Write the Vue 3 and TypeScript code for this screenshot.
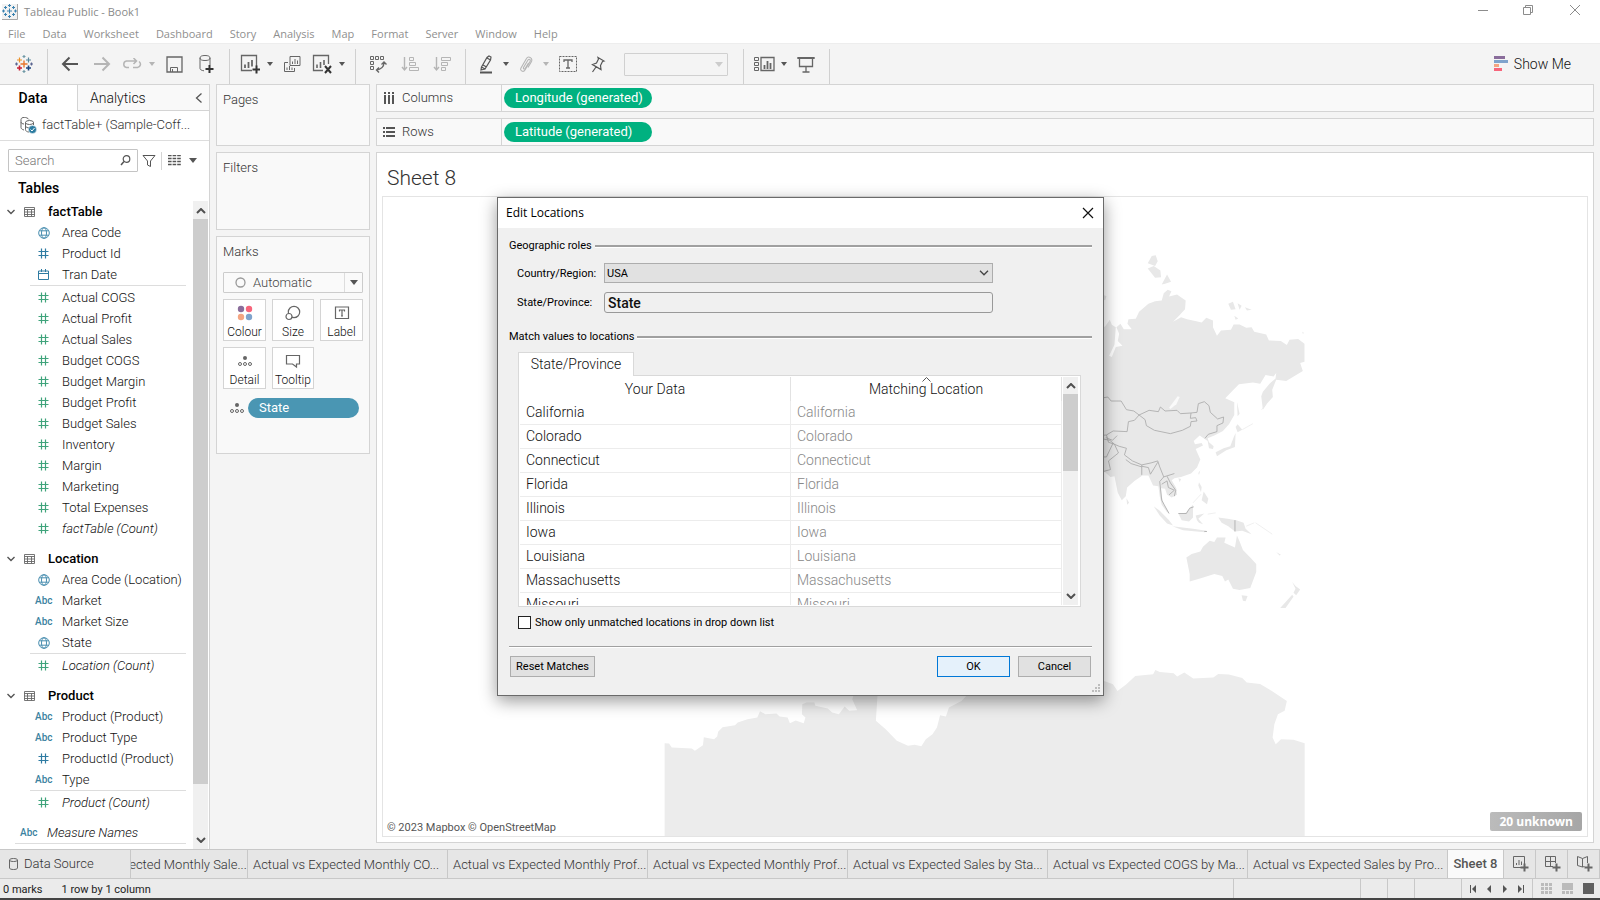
<script setup lang="ts">
import { ref } from 'vue'

type Kind = 'geo' | 'num' | 'date' | 'abc'
interface Field { name: string; kind: Kind; measure?: boolean; italic?: boolean }
interface Group { name: string; dims: Field[]; measures: Field[] }

const menus: string[] = ['File', 'Data', 'Worksheet', 'Dashboard', 'Story', 'Analysis', 'Map', 'Format', 'Server', 'Window', 'Help']

const measure = (name: string): Field => ({ name, kind: 'num', measure: true })
const count = (name: string): Field => ({ name: `${name} (Count)`, kind: 'num', measure: true, italic: true })

const groups: Group[] = [
  {
    name: 'factTable',
    dims: [
      { name: 'Area Code', kind: 'geo' },
      { name: 'Product Id', kind: 'num' },
      { name: 'Tran Date', kind: 'date' },
    ],
    measures: [
      ...['Actual COGS', 'Actual Profit', 'Actual Sales', 'Budget COGS', 'Budget Margin', 'Budget Profit',
        'Budget Sales', 'Inventory', 'Margin', 'Marketing', 'Total Expenses'].map(measure),
      count('factTable'),
    ],
  },
  {
    name: 'Location',
    dims: [
      { name: 'Area Code (Location)', kind: 'geo' },
      { name: 'Market', kind: 'abc' },
      { name: 'Market Size', kind: 'abc' },
      { name: 'State', kind: 'geo' },
    ],
    measures: [count('Location')],
  },
  {
    name: 'Product',
    dims: [
      { name: 'Product (Product)', kind: 'abc' },
      { name: 'Product Type', kind: 'abc' },
      { name: 'ProductId (Product)', kind: 'num' },
      { name: 'Type', kind: 'abc' },
    ],
    measures: [count('Product')],
  },
]

const states: string[] = ['California', 'Colorado', 'Connecticut', 'Florida', 'Illinois', 'Iowa', 'Louisiana', 'Massachusetts', 'Missouri']

const sheets: string[] = [
  'Actual vs Expected Monthly Sale...',
  'Actual vs Expected Monthly CO...',
  'Actual vs Expected Monthly Prof...',
  'Actual vs Expected Monthly Prof...',
  'Actual vs Expected Sales by Sta...',
  'Actual vs Expected COGS by Ma...',
  'Actual vs Expected Sales by Pro...',
]

const search = ref('')
const country = ref('USA')
const role = ref('State')
const onlyUnmatched = ref(false)
</script>

<template>
  <div class="app">
    <header class="titlebar">
      <svg class="applogo" width="16" height="16" viewBox="0 0 16 16" fill="none" stroke="#3b82b0" stroke-width="1">
        <rect x="0" y="0" width="16" height="16" fill="#f2f2f2" stroke="none" />
        <path d="M15.5 0v15.5H0" stroke="#a8a8a8" />
        <path d="M7.500 4.500v5M5 7h5M7.500 0v3M6 1.500h3M7.500 11v3M6 12.500h3M1.500 5.500v3M0 7h3M13.500 5.500v3M12 7h3M3.500 2v3M2 3.500h3M11.500 2v3M10 3.500h3M3.500 9v3M2 10.500h3M11.500 9v3M10 10.500h3" />
      </svg>
      <span class="apptitle">Tableau Public - Book1</span>
      <div class="winbtns">
        <button aria-label="Minimise"><svg width="12" height="12" viewBox="0 0 12 12"><path d="M1 6.500h10" stroke="#8c8c8c" /></svg></button>
        <button aria-label="Restore"><svg width="12" height="12" viewBox="0 0 12 12" fill="none" stroke="#8c8c8c"><path d="M1.500 3.500h7v7h-7zM3.500 3.500v-2h7v7h-2" /></svg></button>
        <button aria-label="Close"><svg width="12" height="12" viewBox="0 0 12 12"><path d="M1 1l10 10M11 1L1 11" stroke="#8c8c8c" /></svg></button>
      </div>
    </header>

    <nav class="menubar">
      <button v-for="m in menus" :key="m">{{ m }}</button>
    </nav>

    <div class="toolbar">
      <button class="tb" aria-label="Start page">
        <svg width="18" height="18" viewBox="0 0 18 18" fill="none" stroke-width="1.200">
          <path d="M9 5.500v7M5.500 9h7" stroke="#e8762c" stroke-width="1.400" />
          <path d="M4.500 2.500v5M2 5h5" stroke="#eb9129" /><path d="M13.500 2.500v5M11 5h5" stroke="#59879b" />
          <path d="M4.500 10.500v5M2 13h5" stroke="#c72035" stroke-width="1.600" /><path d="M13.500 10.500v5M11 13h5" stroke="#1f457e" stroke-width="1.600" />
          <path d="M9 0v3M7.500 1.500h3M9 15v3M7.500 16.500h3" stroke="#7099a6" /><path d="M1.500 7.500v3M0 9h3M16.500 7.500v3M15 9h3" stroke="#5b6591" />
        </svg>
      </button>
      <i class="sep" />
      <button class="tb" aria-label="Back"><svg width="18" height="16" viewBox="0 0 18 16" fill="none" stroke="#555" stroke-width="2"><path d="M17 8H2M8.500 1.500L2 8l6.500 6.500" /></svg></button>
      <button class="tb" aria-label="Forward"><svg width="18" height="16" viewBox="0 0 18 16" fill="none" stroke="#b5b5b5" stroke-width="2"><path d="M1 8h15M9.500 1.500L16 8l-6.500 6.500" /></svg></button>
      <button class="tb narrow" aria-label="Replay"><svg width="20" height="12" viewBox="0 0 20 12" fill="none" stroke="#b5b5b5" stroke-width="1.500"><path d="M7 9.500H4.500a3.300 3.300 0 0 1 0-6.500H14M11 9.500h4.500a3.300 3.300 0 0 0 1.500-6M11.500 0l3 3-3 3" /></svg></button>
      <button class="caret dim" aria-label="Replay options" />
      <button class="tb" aria-label="Save"><svg width="17" height="17" viewBox="0 0 17 17" fill="none" stroke="#666"><path d="M1 1h15v15H1z" stroke-width="1.300" /><path d="M4.500 16v-4.500h7V16M6.500 16v-3" /></svg></button>
      <button class="tb" aria-label="New data source"><svg width="18" height="20" viewBox="0 0 18 20" fill="none" stroke="#666"><ellipse cx="8" cy="4" rx="5" ry="2.500" /><path d="M3 4v10.500c0 1 1.500 2 4 2.300M13 4v7" /><path d="M12.500 11v8M8.500 15h8" stroke="#333" stroke-width="2" /></svg></button>
      <i class="sep" />
      <button class="tb narrow" aria-label="New worksheet"><svg width="20" height="20" viewBox="0 0 20 20" fill="none" stroke="#666"><path d="M12 16.500H1.500v-15h15V12" stroke-width="1.300" /><path d="M5 14v-3.500M8.500 14V8M12 12.500V6" stroke-width="1.800" /><path d="M16.500 11.500v8M12.500 15.500h8" stroke="#333" stroke-width="2" /></svg></button>
      <button class="caret" aria-label="New worksheet options" />
      <button class="tb" aria-label="Duplicate"><svg width="18" height="18" viewBox="0 0 18 18" fill="none" stroke="#666"><path d="M7 1.500h10v9H7zM5 7.500H1.500v9h10V13" /><path d="M9.500 9V6.500M12 9V4M14.500 9V5.500M4 15v-2.500M6.500 15v-4M9 15v-2.500" /></svg></button>
      <button class="tb narrow" aria-label="Clear sheet"><svg width="20" height="20" viewBox="0 0 20 20" fill="none" stroke="#666"><path d="M11 16.500H1.500v-15h15V10" stroke-width="1.300" /><path d="M5 14v-3.500M8.500 14V8M12 11V6" stroke-width="1.600" /><path d="M13 12l6 7M19 12l-6 7" stroke="#333" stroke-width="2" /></svg></button>
      <button class="caret" aria-label="Clear options" />
      <i class="sep" />
      <button class="tb" aria-label="Swap rows and columns"><svg width="18" height="18" viewBox="0 0 18 18" fill="none" stroke="#666"><path d="M1.500 1.500h3v3h-3zM6.500 1.500h3v3h-3zM11.500 1.500h3v3h-3zM1.500 6.500h3v3h-3zM1.500 11.500h3v3h-3z" /><path d="M15 7.500c0 4-3 7-7.500 7.500M12.500 9.500L15 7l2.500 2.500M10 12.500L7.500 15l2.500 2.500" stroke-width="1.400" /></svg></button>
      <button class="tb" aria-label="Sort ascending"><svg width="19" height="16" viewBox="0 0 19 16" fill="none" stroke="#b5b5b5"><path d="M3.500 1v13M1 11l2.500 3L6 11" stroke-width="1.400" /><path d="M8.500 1.500h4v3h-4zM8.500 6.500h6v3h-6zM8.500 11.500h9v3h-9z" /></svg></button>
      <button class="tb" aria-label="Sort descending"><svg width="19" height="16" viewBox="0 0 19 16" fill="none" stroke="#b5b5b5"><path d="M3.500 1v13M1 11l2.500 3L6 11" stroke-width="1.400" /><path d="M8.500 1.500h9v3h-9zM8.500 6.500h6v3h-6zM8.500 11.500h4v3h-4z" /></svg></button>
      <i class="sep" />
      <button class="tb narrow" aria-label="Highlight"><svg width="14" height="19" viewBox="0 0 14 19" fill="none" stroke="#555"><path d="M2.500 12L8 2.500l2-1.500 2 1-.5 3L6 14zM4 10l3.500 2M8 3l3.500 2M2.500 12L2 15l4-1" stroke-width="1.200" /><path d="M1 17.500h12" stroke-width="2" /></svg></button>
      <button class="caret" aria-label="Highlight options" />
      <button class="tb narrow" aria-label="Group members"><svg width="14" height="17" viewBox="0 0 14 17" fill="none" stroke="#b5b5b5" stroke-width="1.100"><path d="M4.500 11.500L9 4c1-1.500 3-.5 2 1.500L6 14c-1.500 2.500-5.500 1-4-2L7.500 2.500C9-.3 14 1.500 12.500 5.500L9 11.500M4.500 11.500c-.5 1.500 1 2 1.800.8L9.500 7" /></svg></button>
      <button class="caret dim" aria-label="Group options" />
      <button class="tb" aria-label="Show mark labels"><svg width="18" height="16" viewBox="0 0 18 16" fill="none" stroke="#666"><path d="M.5.5h17v15H.5z" stroke-dasharray="2 1" /><path d="M5 6V4h8v2M9 4v8M7 12h4" stroke-width="1.300" /></svg></button>
      <button class="tb narrow" aria-label="Fix axes"><svg width="16" height="17" viewBox="0 0 16 17" fill="none" stroke="#555" stroke-width="1.200"><path d="M8 1.500l6 3.500-1.500.5-2 4 .5 4L2.500 8.500l4-1.500 2-4zM6 11l-3.500 5" /></svg></button>
      <span class="fit"><select aria-label="Fit"><option value=""></option></select><i class="tri" /></span>
      <i class="sep" />
      <button class="tb narrow" aria-label="Show cards"><svg width="21" height="16" viewBox="0 0 21 16" fill="none" stroke="#666"><path d="M.5 1.500h4v3h-4zM.5 6.500h4v3h-4zM.5 11.500h4v3h-4z" /><path d="M7 1.500h13v13H7z" stroke-width="1.300" /><path d="M10.500 13V9M13.500 13V5M16.500 13V7" stroke-width="1.800" /></svg></button>
      <button class="caret" aria-label="Card options" />
      <button class="tb" aria-label="Presentation mode"><svg width="18" height="17" viewBox="0 0 18 17" fill="none" stroke="#666" stroke-width="1.300"><path d="M.5 2h17M2.500 2v8.500h13V2M9 10.500V16M5.500 16h7" /><path d="M.5 2h17" stroke-width="2" /></svg></button>
      <i class="sep" />
      <button class="showme">
        <svg width="14" height="16" viewBox="0 0 14 16"><path fill="#8a6d9b" d="M0 0h11v3H0z" /><path fill="#7fa3cc" d="M0 4h14v3H0z" /><path fill="#f4a582" d="M0 8h5v3H0z" /><path fill="#f7657b" d="M0 12h8v3H0z" /></svg>
        Show Me
      </button>
    </div>

    <main class="work">
      <aside class="side">
        <div class="sidetabs">
          <button class="on">Data</button>
          <button class="off">Analytics
            <svg width="8" height="10" viewBox="0 0 8 10" fill="none" stroke="#555" stroke-width="1.300"><path d="M6.500.5L1.500 5l5 4.500" /></svg>
          </button>
        </div>
        <button class="source">
          <svg width="17" height="17" viewBox="0 0 17 17" fill="none" stroke="#666"><path d="M9 2.500C7-.3 1-.3 1 2.500v8c0 1 1 2 3 2.500M1 5c0 1 1.500 2 3 2" /><ellipse cx="9.500" cy="5.500" rx="4" ry="2" /><path d="M5.500 5.500v7c0 1.500 1.500 2.500 3.500 2.500M13.500 5.500V8M5.500 9c0 1 2 2 4 2" /><circle cx="12.500" cy="12.500" r="4" fill="#2b7ba0" stroke="#fff" stroke-width=".5" /><path d="M10.500 12.500l1.500 1.500 2.500-3" stroke="#fff" /></svg>
          factTable+ (Sample-Coff...
        </button>
        <div class="find">
          <span class="box">
            <input v-model="search" type="text" placeholder="Search" aria-label="Search">
            <svg width="11" height="11" viewBox="0 0 11 11" fill="none" stroke="#555" stroke-width="1.200"><circle cx="6.500" cy="4" r="3.300" /><path d="M4 6.500L1 10" stroke-width="1.500" /></svg>
          </span>
          <button aria-label="Filter"><svg width="14" height="14" viewBox="0 0 14 14" fill="none" stroke="#555"><path d="M1 1.500h12L8.500 7v5.500l-3-1.500V7z" /></svg></button>
          <i class="vbar" />
          <button class="view" aria-label="View as"><svg width="13" height="11" viewBox="0 0 13 11" fill="none" stroke="#555"><path d="M0 .5h13M0 3.500h13M0 6.500h13M0 9.500h13" stroke-width="1.400" stroke-dasharray="3.600 1" /></svg><i class="tri" /></button>
        </div>
        <h2>Tables</h2>
        <div class="treewrap">
          <div class="tree">
            <section v-for="g in groups" :key="g.name">
              <h3>
                <svg width="8" height="6" viewBox="0 0 8 6" fill="none" stroke="#555" stroke-width="1.400"><path d="M.5 1L4 4.500 7.500 1" /></svg>
                <svg class="tbl" width="11" height="10" viewBox="0 0 11 10" fill="none" stroke="#666"><path d="M.5.5h10v9H.5zM.5 2.500h10M.5 5h10M.5 7.500h10M3.500 2.500v7M7.500 2.500v7" stroke-width=".9" /></svg>
                {{ g.name }}
              </h3>
              <ul>
                <li v-for="f in g.dims" :key="f.name" :class="{ it: f.italic }">
                  <span class="fi">
                    <svg v-if="f.kind === 'geo'" width="12" height="12" viewBox="0 0 12 12" fill="none" stroke="#4a8fb0"><circle cx="6" cy="6" r="5.300" /><ellipse cx="6" cy="6" rx="2.500" ry="5.300" /><path d="M1.500 3.800h9M1.500 8.200h9" /></svg>
                    <svg v-else-if="f.kind === 'num'" width="11" height="11" viewBox="0 0 11 11" fill="none" stroke="#2e7ba2" stroke-width="1.200"><path d="M3.500.5v10M7.500.5v10M.5 3.500h10M.5 7.500h10" /></svg>
                    <svg v-else-if="f.kind === 'date'" width="11" height="11" viewBox="0 0 11 11" fill="none" stroke="#2e7ba2"><path d="M.5 2h10v8.500H.5zM.5 4.500h10M3.500 0v3M7.500 0v3" /></svg>
                    <b v-else>Abc</b>
                  </span>{{ f.name }}
                </li>
              </ul>
              <hr>
              <ul>
                <li v-for="f in g.measures" :key="f.name" :class="{ it: f.italic }">
                  <span class="fi"><svg width="11" height="11" viewBox="0 0 11 11" fill="none" stroke="#3fa37b" stroke-width="1.200"><path d="M3.500.5v10M7.500.5v10M.5 3.500h10M.5 7.500h10" /></svg></span>{{ f.name }}
                </li>
              </ul>
            </section>
            <div class="names it"><span class="fi"><b>Abc</b></span>Measure Names</div>
            <hr class="wide">
          </div>
          <div class="vscroll">
            <svg width="10" height="6" viewBox="0 0 10 6" fill="none" stroke="#505050" stroke-width="2"><path d="M1 5l4-4 4 4" /></svg>
            <i class="thumb" />
            <svg width="10" height="6" viewBox="0 0 10 6" fill="none" stroke="#505050" stroke-width="2"><path d="M1 1l4 4 4-4" /></svg>
          </div>
        </div>
      </aside>

      <div class="cards">
        <section class="card pages">Pages</section>
        <section class="card filters">Filters</section>
        <section class="card marks">
          Marks
          <button class="marktype">
            <svg width="11" height="11" viewBox="0 0 11 11" fill="none" stroke="#999"><circle cx="5.500" cy="5.500" r="4.500" stroke-width="1.300" /></svg>
            <span>Automatic</span><i class="drop"><i class="tri" /></i>
          </button>
          <div class="markbtns">
            <button><svg width="16" height="16" viewBox="0 0 16 16"><circle cx="4" cy="4" r="3.200" fill="#8a6d9b" /><circle cx="12" cy="4" r="3.200" fill="#f7657b" /><circle cx="4" cy="12" r="3.200" fill="#f4a582" /><circle cx="12" cy="12" r="3.200" fill="#7fa3cc" /></svg>Colour</button>
            <button><svg width="16" height="16" viewBox="0 0 16 16" fill="none" stroke="#666" stroke-width="1.200"><circle cx="9" cy="7" r="5.700" /><circle cx="4" cy="11.500" r="3" fill="#fff" /></svg>Size</button>
            <button><svg width="16" height="16" viewBox="0 0 16 16" fill="none" stroke="#666" stroke-width="1.200"><path d="M1.500 2h13v11.500h-13zM5.500 6.500V5h5v1.500M8 5v6M7 11h2" /></svg>Label</button>
            <button><svg width="16" height="16" viewBox="0 0 16 16" fill="none" stroke="#666"><circle cx="8" cy="5" r="2" fill="#666" stroke="none" /><circle cx="3" cy="11" r="1.500" /><circle cx="8" cy="11" r="1.500" /><circle cx="13" cy="11" r="1.500" /></svg>Detail</button>
            <button><svg width="16" height="16" viewBox="0 0 16 16" fill="none" stroke="#666" stroke-width="1.200"><path d="M1.500 2.500h13v8.500h-3v3l-4-3h-6z" /></svg>Tooltip</button>
          </div>
          <div class="markpill">
            <svg width="16" height="16" viewBox="0 0 16 16" fill="none" stroke="#666"><circle cx="8" cy="5" r="2" fill="#666" stroke="none" /><circle cx="3" cy="11" r="1.500" /><circle cx="8" cy="11" r="1.500" /><circle cx="13" cy="11" r="1.500" /></svg>
            <button class="pill blue">State</button>
          </div>
        </section>
      </div>

      <div class="canvas">
        <section class="shelf">
          <h4><svg width="12" height="14" viewBox="0 0 12 14" fill="#555"><path d="M1 1h2v2H1zM5 1h2v2H5zM9 1h2v2H9zM1 4h2v9H1zM5 4h2v9H5zM9 4h2v9H9z" /></svg>Columns</h4>
          <button class="pill green">Longitude (generated)</button>
        </section>
        <section class="shelf">
          <h4><svg width="12" height="14" viewBox="0 0 12 14" fill="#555"><path d="M0 2h2v2H0zM3 2h9v2H3zM0 6h2v2H0zM3 6h9v2H3zM0 10h2v2H0zM3 10h9v2H3z" /></svg>Rows</h4>
          <button class="pill green">Latitude (generated)</button>
        </section>
        <section class="sheet">
          <h1>Sheet 8</h1>
          <div class="map">
            <svg class="world" viewBox="383 197 1204 640" fill="#e8e8e8">
              <g transform="translate(1080 230) scale(.33333)">
                <path d="M50 300L76 290 90 270 96 285 108 292 104 345 88 378 96 382 108 352 128 348 114 334 118 312 110 292 122 282 132 298 156 298 143 282 146 268 168 267 178 246 206 222 226 214 246 212 252 190 264 180 275 184 268 200 292 194 306 204 318 212 316 238 298 258 280 276 304 262 322 268 350 274 366 278 380 264 400 272 400 292 412 318 424 302 454 300 462 284 480 284 500 294 516 292 524 306 560 314 568 332 604 334 622 346 630 330 656 328 675 342V396L662 400 670 424 650 436 620 454 590 450 578 480 580 502 562 522 550 540 545 500 550 486 570 462 588 446 590 430 582 440 558 436 542 462 520 458 478 464 458 484 437 506 464 518 464 556 448 584 430 604 404 618 384 626 388 638 402 650 400 658 388 656 384 634 372 626 360 618 342 634 346 644 366 640 370 648 348 658 362 690 352 714 334 732 304 742 284 746 276 752 290 776 292 796 276 804 262 796 256 778 244 776 246 800 252 824 268 850 262 848 246 826 240 800 236 770 220 768 206 738 188 738 164 754 142 774 138 800 126 812 114 790 104 740 92 742 76 728 50 724z" />
                <path d="M204 100L216 78 228 76 234 94 226 108zM204 116L222 108 242 122 244 142 226 144zM246 164L262 134 274 156 256 162zM446 222L460 216 468 238 454 240zM474 220L486 228 480 240zM496 232L516 240 502 242zM464 258L476 266 468 270zM70 195l10 4-4 12-6-2zM668 306l6 4-4 2z" />
                <path d="M472 516L480 552 474 560zM468 592L474 584 488 600 474 608zM468 610L466 652 440 662 412 680 408 668 432 656 452 650 462 624zM356 730l6-8-4 14zM358 758l8 14-2 16-8-20zM372 786l14 22-4 16-16-12zM296 746l8 2-4 10zM140 806l8 14-6 6z" />
                <path d="M222 830L240 844 268 872 280 888 262 882 240 858zM278 890L340 898 380 904 376 908 310 902zM296 852L318 850 340 826 340 864 328 876 306 872zM348 858L374 852 356 868 370 884 358 880 352 872zM416 864L444 868 470 872 492 880 498 898 516 914 488 904 466 906 446 890 426 880z" />
                <path d="M320 984L336 974 362 966 370 952 390 934 404 938 412 924 438 924 434 940 466 954 472 918 480 936 490 962 512 984 530 1004 530 1028 512 1076 480 1082 460 1078 446 1050 436 1056 428 1040 404 1034 366 1046 330 1056 330 1034zM486 1098L504 1100 498 1116 490 1114zM638 1058L648 1070 662 1080 650 1098 642 1090 648 1078zM638 1096L642 1102 618 1136 602 1136zM590 968l14 8-4 2z" />
                <g fill="none" stroke="#e8e8e8" stroke-width="2"><path d="M488 600L520 582M546 540l14-18M500 890l24-10M528 880l50 34M340 820l24-26M384 854l24-4" /></g>
                <path fill="#fafafa" d="M268 534l26-34 6 2-10 22-18 14z" />
                <g fill="none" stroke="#a9a9a9" stroke-width="2.500">
                  <path d="M60 506L84 502 94 514 124 514 140 540 162 544 178 556 208 542 236 546 242 532 256 544 292 542 302 552 334 550 352 548 356 522 374 516 388 528 392 548 414 568 432 562 430 580 412 588 412 606 386 614 376 626" />
                  <path d="M178 556L196 570 200 588 224 602 272 612 308 602 332 590 334 576 352 574 348 564 332 566 334 550" />
                  <path d="M178 556L164 572 146 576 142 606 100 604 80 616 60 618M60 626L90 632 104 644 118 650 140 656 134 676 158 694 186 706 214 700 234 694 240 712 252 742 284 732M138 690l16 12 32 10M186 706v30M186 710l20 4 6 20 10-16 12-20M104 644l12 26-30 24 6 26-30 8M100 640l-20 42-20 0M78 624l20 8 14-14M80 616l6 22 18 6M252 742l-12 14 6 56 22 40M246 764l16-10 4 20 18 8-16 14M262 740l10 20 16 22-4 18M296 852l24 0 10-16 12-4M466 872v34M374 906h8" />
                </g>
              </g>
              <path transform="translate(640 650) scale(.44643 .33333)" fill="#ececec" d="M54 282L64 283 70 295 115 298 122 305 140 288 142 264 165 270 172 262 174 248 184 234 212 228 218 220 240 210 262 205 268 186 280 195 305 193 312 202 330 205 335 222 348 214 366 222 370 205 362 195 363 165 372 160 390 160 392 170 420 178 430 190 445 195 458 172 468 185 486 183 475 150 480 130 532 130 528 215 550 240 575 275 600 290 615 287 630 291 640 270 655 255 665 235 672 198 685 202 692 175 720 155 738 130 1000 120 1040 95 1060 105 1070 125 1090 105 1110 80 1150 75 1155 62 1165 68 1196 72 1204 82 1220 70 1240 88 1285 85 1296 74 1320 76 1350 86 1360 100 1390 104 1410 120 1450 155 1445 185 1430 195 1422 225 1418 265 1425 285 1437 270 1465 272 1490 282V562H54z" />
            </svg>
            <span class="credit">© 2023 Mapbox © OpenStreetMap</span>
            <button class="unknown">20 unknown</button>
          </div>
        </section>
      </div>
    </main>

    <footer class="sheetbar">
      <button class="ds"><svg width="9" height="12" viewBox="0 0 9 12" fill="none" stroke="#666"><path d="M.5 2v8c0 2 8 2 8 0V2c0-2-8-2-8 0c0 2 8 2 8 0" /></svg>Data Source</button>
      <div class="strip"><button v-for="(s, i) in sheets" :key="i">{{ s }}</button></div>
      <button class="current">Sheet 8</button>
      <button class="new" aria-label="New worksheet"><svg width="16" height="16" viewBox="0 0 16 16" fill="none" stroke="#666"><path d="M9 11.500H.5V.5h11V8M3.500 9V7M6 9V4M8.500 9V5.500" /><path d="M11.500 7.500v8M7.500 11.500h8" stroke-width="2" /></svg></button>
      <button class="new" aria-label="New dashboard"><svg width="16" height="16" viewBox="0 0 16 16" fill="none" stroke="#666"><path d="M8 10.500H.5V.5h10V7M.5 5.500h10M5.500.5v10" /><path d="M11.500 7.500v8M7.500 11.500h8" stroke-width="2" /></svg></button>
      <button class="new" aria-label="New story"><svg width="16" height="16" viewBox="0 0 16 16" fill="none" stroke="#666"><path d="M5.500 11L.5 9.500v-9l5 2 5-2V7M5.500 2.500V11l2-.5" /><path d="M11.500 7.500v8M7.500 11.500h8" stroke-width="2" /></svg></button>
    </footer>

    <div class="status">
      <span>0 marks</span><span class="dim2">1 row by 1 column</span>
      <i class="c1" /><i class="c2" /><i class="c2" /><i class="c3" />
      <div class="pager">
        <button aria-label="First"><svg width="8" height="8" viewBox="0 0 8 8" fill="#555"><path d="M1 0h1v8H1zM7 0v8L3 4z" /></svg></button>
        <button aria-label="Previous"><svg width="8" height="8" viewBox="0 0 8 8" fill="#555"><path d="M6 0v8L2 4z" /></svg></button>
        <button aria-label="Next"><svg width="8" height="8" viewBox="0 0 8 8" fill="#555"><path d="M2 0v8l4-4z" /></svg></button>
        <button aria-label="Last"><svg width="8" height="8" viewBox="0 0 8 8" fill="#555"><path d="M6 0h1v8H6zM1 0v8l4-4z" /></svg></button>
      </div>
      <div class="views">
        <button aria-label="Sheet sorter"><svg width="11" height="11" viewBox="0 0 11 11" fill="#bbb"><path d="M0 0h3v3H0zM4 0h3v3H4zM8 0h3v3H8zM0 4h3v3H0zM4 4h3v3H4zM8 4h3v3H8zM0 8h3v3H0zM4 8h3v3H4zM8 8h3v3H8z" /></svg></button>
        <button aria-label="Filmstrip"><svg width="11" height="11" viewBox="0 0 11 11" fill="#bbb"><path d="M0 0h11v7H0zM0 8h3v3H0zM4 8h3v3H4zM8 8h3v3H8z" /></svg></button>
        <button aria-label="Sheet tabs"><svg width="11" height="11" viewBox="0 0 11 11" fill="#606060"><path d="M0 0h11v11H0z" /></svg></button>
      </div>
    </div>
    <div class="taskedge" />

    <div class="overlay">
      <form class="dialog" role="dialog" aria-labelledby="dlg-title" @submit.prevent>
        <div class="dtitle">
          <span id="dlg-title">Edit Locations</span>
          <button type="button" aria-label="Close"><svg width="12" height="12" viewBox="0 0 12 12"><path d="M1 1l10 10M11 1L1 11" stroke="#111" stroke-width="1.200" /></svg></button>
        </div>
        <div class="dbody">
          <div class="legend">Geographic roles</div>
          <div class="frow first">
            <label for="country">Country/Region:</label>
            <span class="selwrap">
              <select id="country" v-model="country"><option>USA</option></select>
              <svg width="10" height="6" viewBox="0 0 10 6" fill="none" stroke="#444" stroke-width="1.300"><path d="M1 .8l4 4 4-4" /></svg>
            </span>
          </div>
          <div class="frow second">
            <label for="role">State/Province:</label>
            <input id="role" v-model="role" type="text" readonly>
          </div>
          <div class="legend two">Match values to locations</div>
          <div class="dtabs"><button type="button">State/Province</button></div>
          <div class="grid">
            <div class="clip">
              <table>
                <thead>
                  <tr>
                    <th>Your Data</th>
                    <th>Matching Location<svg class="sorted" width="9" height="5" viewBox="0 0 9 5" fill="none" stroke="#555"><path d="M.5 4.500l4-4 4 4" /></svg></th>
                  </tr>
                </thead>
                <tbody>
                  <tr v-for="s in states" :key="s"><td>{{ s }}</td><td class="muted">{{ s }}</td></tr>
                </tbody>
              </table>
            </div>
            <div class="vscroll">
              <svg width="10" height="6" viewBox="0 0 10 6" fill="none" stroke="#505050" stroke-width="2"><path d="M1 5l4-4 4 4" /></svg>
              <i class="thumb" />
              <svg width="10" height="6" viewBox="0 0 10 6" fill="none" stroke="#505050" stroke-width="2"><path d="M1 1l4 4 4-4" /></svg>
            </div>
          </div>
          <div class="check"><input id="only" v-model="onlyUnmatched" type="checkbox"><label for="only">Show only unmatched locations in drop down list</label></div>
          <hr class="rule">
          <div class="actions">
            <button type="button" class="reset">Reset Matches</button>
            <button type="submit" class="ok">OK</button>
            <button type="button" class="cancel">Cancel</button>
          </div>
          <svg class="grip" width="9" height="9" viewBox="0 0 9 9" fill="#bdbdbd"><path d="M6 0h2v2H6zM3 3h2v2H3zM6 3h2v2H6zM0 6h2v2H0zM3 6h2v2H3zM6 6h2v2H6z" /></svg>
        </div>
      </form>
    </div>
  </div>
</template>

<style>
html, body { margin: 0; background: #f4f4f4; }
</style>

<style scoped>
.app { position: relative; min-height: 100vh; display: flex; flex-direction: column; background: #f4f4f4; font: 300 13px/20px Roboto, "Liberation Sans", sans-serif; color: #111; }
.app * { box-sizing: border-box; }
button { font: inherit; color: inherit; background: none; border: 0; padding: 0; margin: 0; display: flex; align-items: center; justify-content: center; white-space: nowrap; }
svg { display: block; flex: none; }
h1, h2, h3, h4, ul { margin: 0; padding: 0; list-style: none; }
.tri { width: 0; height: 0; border: 4px solid transparent; border-top: 5px solid #555; border-bottom: 0; }

.titlebar { display: flex; align-items: center; height: 24px; background: #fff; padding-left: 2px; font: 11px/18px "Open Sans", "Noto Sans", sans-serif; color: #8a8a8a; }
.apptitle { margin-left: 6px; }
.winbtns { margin-left: auto; display: flex; align-self: flex-start; }
.winbtns button { width: 45px; height: 20px; }
.winbtns button:last-child { width: 50px; }
.menubar { display: flex; gap: 17px; height: 19px; background: #fff; padding-left: 8px; font: 11px/18px "Open Sans", "Noto Sans", sans-serif; color: #8f8f8f; }

.toolbar { display: flex; align-items: center; height: 41px; padding: 0 29px 0 8px; border-top: 1px solid #ededed; background: #f4f4f4; }
.tb { width: 32px; height: 32px; flex: none; }
.tb.narrow { width: 28px; }
.sep { width: 1px; height: 35px; background: #d0d0d0; margin: 4px 6px 0 7px; flex: none; }
.caret { width: 12px; height: 24px; flex: none; }
.caret::after { content: ""; border: 3px solid transparent; border-top: 4px solid #555; border-bottom: 0; }
.caret.dim::after { border-top-color: #b5b5b5; }
.fit { width: 104px; height: 23px; margin: 0 8px 0 12px; position: relative; flex: none; }
.fit select { appearance: none; width: 100%; height: 100%; border: 1px solid #d0d0d0; border-radius: 1px; background: #f4f4f4; }
.fit .tri { position: absolute; right: 5px; top: 9px; border-top-color: #ccc; }
.showme { margin-left: auto; gap: 6px; font-size: 14px; }

.work { flex: 1; display: flex; min-height: 0; }
.side { width: 210px; flex: none; display: flex; flex-direction: column; background: #fff; border-top: 1px solid #d4d4d4; border-right: 1px solid #d4d4d4; }
.sidetabs { display: flex; height: 26px; font-size: 14px; }
.sidetabs .on { width: 77px; font-weight: 500; color: #000; padding-right: 11px; }
.sidetabs .off { flex: 1; justify-content: space-between; background: #f9f9f9; border-left: 1px solid #d4d4d4; border-bottom: 1px solid #d4d4d4; padding: 0 6px 0 12px; }
.source { height: 30px; justify-content: flex-start; gap: 5px; padding-left: 20px; padding-bottom: 1px; border-bottom: 1px solid #ddd; color: #333; }
.find { display: flex; align-items: center; padding: 8px 0 0 8px; }
.box { width: 130px; height: 23px; border: 1px solid #c4c4c4; display: flex; align-items: center; padding: 0 6px; border-radius: 1px; }
.box input { flex: 1; min-width: 0; border: 0; padding: 0; font: inherit; color: #333; background: none; outline: none; }
.box input::placeholder { color: #777; opacity: 1; }
.find > button { margin-left: 4px; }
.vbar { width: 1px; height: 18px; background: #d4d4d4; margin: 0 2px 0 5px; }
.find .view { gap: 8px; }
.side h2 { font-size: 14px; line-height: 20px; font-weight: 500; color: #000; margin: 6px 0 3px 18px; }
.treewrap { flex: 1; display: flex; }
.tree { flex: 1; padding-bottom: 4px; }
.tree section { margin-bottom: 9px; }
.tree h3 { display: flex; align-items: center; height: 21px; padding-left: 7px; font-size: 13px; font-weight: 500; color: #000; }
.tree h3 .tbl { margin: 1px 13px 0 9px; }
.tree li, .names { height: 21px; display: flex; align-items: center; padding-left: 34px; white-space: nowrap; }
.fi { width: 28px; display: flex; padding-left: 4px; }
.fi b { font-size: 10px; font-weight: 500; color: #3b82a0; font-style: normal; margin-left: -3px; }
.tree .names { padding-left: 19px; }
.it { font-style: italic; }
.tree hr { border: 0; height: 1px; background: #ddd; margin: 0 7px 1px 30px; }
.tree hr.wide { margin-left: 15px; }
.vscroll { width: 15px; background: #f0f0f0; display: flex; flex-direction: column; align-items: center; padding: 7px 0 6px; margin-right: 1px; }
.vscroll .thumb { width: 15px; height: 565px; background: #cdcdcd; margin: 5px 0 auto; }

.cards { width: 154px; margin: 0 6px; display: flex; flex-direction: column; gap: 6px; flex: none; color: #333; }
.card { border: 1px solid #d4d4d4; background: #f9f9f9; padding: 6px; line-height: 18px; }
.pages { height: 62px; }
.filters { height: 78px; }
.marks { height: 218px; }
.marktype { width: 140px; height: 21px; margin-top: 11px; border: 1px solid #ccc; justify-content: flex-start; padding-left: 11px; background: #fafafa; border-radius: 1px; color: #444; font-size: 13px; }
.marktype span { margin-left: 7px; }
.drop { margin-left: auto; width: 18px; height: 19px; border-left: 1px solid #ddd; display: flex; align-items: center; justify-content: center; }
.markbtns { display: grid; grid-template-columns: 43px 42px 43px; gap: 6px; margin-top: 6px; }
.markbtns button { height: 42px; padding-top: 4px; border: 1px solid #d4d4d4; background: #fff; flex-direction: column; gap: 3px; font-size: 12px; line-height: 16px; color: #111; }
.markpill { display: flex; align-items: center; gap: 3px; margin-top: 9px; padding-left: 6px; }
.pill { height: 20px; border-radius: 10px; color: #fff; justify-content: flex-start; padding-left: 11px; font-weight: 400; }
.blue { background: #4a96b3; width: 111px; }
.green { background: #00b180; width: 148px; }

.canvas { flex: 1; min-width: 0; display: flex; flex-direction: column; gap: 6px; padding-right: 6px; padding-bottom: 6px; }
.shelf { display: flex; align-items: center; height: 28px; border: 1px solid #d4d4d4; background: #f9f9f9; }
.shelf h4 { width: 125px; height: 26px; display: flex; align-items: center; gap: 7px; padding-left: 6px; border-right: 1px solid #d4d4d4; font-weight: 300; font-size: 13px; color: #333; margin-right: 2px; }
.sheet { flex: 1; background: #fff; border: 1px solid #d4d4d4; padding: 0 5px 5px; display: flex; flex-direction: column; }
.sheet h1 { font-size: 21px; line-height: 24px; font-weight: 300; color: #333; padding: 13px 5px 6px; }
.map { flex: 1; position: relative; border: 1px solid #e4e4e4; min-height: 400px; }
.world { position: absolute; inset: 0; width: 100%; height: 100%; }
.credit { position: absolute; left: 4px; bottom: 0; font-size: 11px; line-height: 17px; font-weight: 400; color: #555; }
.unknown { position: absolute; right: 5px; bottom: 5px; height: 19px; padding: 0 9px; border-radius: 2px; background: linear-gradient(90deg, #bbb, #a6a6a6); color: #fff; font: 700 12px/18px "Open Sans", sans-serif; }

.sheetbar { display: flex; height: 30px; border-top: 1px solid #c8c8c8; border-bottom: 1px solid #c8c8c8; border-right: 1px solid #c8c8c8; background: #e6e6e6; color: #333; }
.ds { width: 131px; flex: none; justify-content: flex-start; gap: 6px; padding-left: 9px; border-right: 1px solid #c8c8c8; }
.strip { flex: 1; min-width: 0; overflow: hidden; display: flex; justify-content: flex-end; }
.strip button { width: 200px; flex: none; justify-content: flex-start; padding: 1px 0 0 5px; border-right: 1px solid #c8c8c8; }
.current { width: 55px; background: #fafafa; font-weight: 500; color: #555; }
.new { width: 32px; border-left: 1px solid #c8c8c8; padding-left: 3px; }
.status { display: flex; align-items: center; height: 19px; background: #ebebeb; font-size: 11px; line-height: 18px; font-weight: 400; color: #222; padding-left: 3px; }
.status > span { padding-top: 2px; }
.status .dim2 { margin-left: 19px; margin-right: auto; }
.status > i { height: 19px; border-left: 1px solid #c8c8c8; }
.c1 { width: 127px; }
.c2 { width: 27px; }
.c3 { width: 47px; }
.pager, .views { display: flex; height: 19px; align-items: center; border-left: 1px solid #c8c8c8; }
.pager { width: 71px; padding-left: 3px; }
.pager button { width: 16px; height: 16px; }
.views { width: 68px; padding-left: 3px; }
.views button { width: 21px; height: 16px; }
.taskedge { height: 2px; background: #444; }

.overlay { position: absolute; inset: 0; display: flex; align-items: center; justify-content: center; padding: 0 0 7px 1px; }
.dialog { width: 607px; border: 1px solid #6a6a6a; background: #f0f0f0; box-shadow: 0 5px 16px rgba(0, 0, 0, .4); font: 400 11px/14px Roboto, "Liberation Sans", sans-serif; color: #000; }
.dtitle { height: 30px; background: #fff; display: flex; align-items: center; justify-content: space-between; padding: 0 9px 1px 8px; font: 12px/18px "Open Sans", sans-serif; }
.dbody { position: relative; padding: 10px 11px 18px; }
.legend { display: flex; align-items: center; gap: 3px; height: 16px; }
.legend::after { content: ""; flex: 1; height: 2px; background: #a0a0a0; border-bottom: 1px solid #fff; }
.frow { display: flex; align-items: center; padding-left: 8px; }
.frow label { width: 87px; padding-top: 1px; }
.frow.first { margin-top: 9px; }
.frow.second { margin-top: 9px; }
.selwrap { position: relative; width: 389px; height: 20px; }
.selwrap svg { position: absolute; right: 4px; top: 7px; }
.selwrap select { appearance: none; width: 100%; height: 20px; border: 1px solid #adadad; background: #e1e1e1; padding: 1px 2px 0; font: inherit; color: #000; border-radius: 0; }
.frow input { width: 389px; height: 21px; border: 1px solid #999; border-radius: 3px; background: #f0f0f0; padding: 0 3px; font: 500 14px/18px Roboto, sans-serif; color: #111; }
.legend.two { margin-top: 16px; }
.dtabs { padding-left: 9px; margin-top: 7px; }
.dtabs button { position: relative; z-index: 1; width: 116px; height: 24px; border: 1px solid #d9d9d9; border-bottom: 0; background: #fff; font: 300 14px/20px Roboto, sans-serif; color: #111; padding-bottom: 1px; }
.grid { margin: -1px 11px 0 9px; height: 232px; border: 1px solid #d9d9d9; background: #fff; padding: 1px; display: flex; }
.clip { flex: 1; overflow: hidden; }
table { width: 100%; border-collapse: separate; border-spacing: 0; table-layout: fixed; font: 300 14px/20px Roboto, sans-serif; color: #111; }
th { font-weight: 300; height: 24px; padding: 0; border-right: 1px solid #e2e2e2; position: relative; }
.sorted { position: absolute; left: calc(50% - 4px); top: 0; }
td { height: 24px; padding: 0 6px 2px; border-right: 1px solid #ececec; border-bottom: 1px solid #ececec; }
td.muted { color: #888; }
.grid .vscroll { margin-left: 1px; padding-top: 6px; }
.grid .thumb { height: 77px; }
.check { display: flex; align-items: center; gap: 4px; padding-left: 9px; margin-top: 8px; height: 15px; }
.check input { appearance: none; width: 13px; height: 13px; margin: 0; border: 1px solid #222; background: #fff; }
.check label { padding-top: 1px; }
.rule { border: 0; height: 2px; background: #a0a0a0; border-bottom: 1px solid #fff; margin: 16px 0 8px; }
.actions { display: flex; gap: 8px; padding: 0 1px; }
.actions button { height: 21px; border: 1px solid #adadad; background: #e1e1e1; width: 73px; padding-top: 1px; }
.actions .reset { width: 85px; margin-right: auto; }
.actions .ok { border-color: #0078d7; background: #e5f1fb; }
.grip { position: absolute; right: 2px; bottom: 2px; }
</style>
